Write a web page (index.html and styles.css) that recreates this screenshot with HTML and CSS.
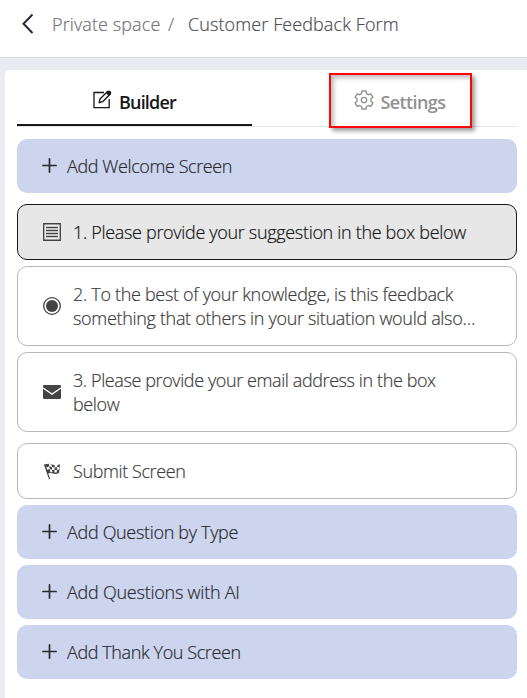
FILE: index.html
```html
<!DOCTYPE html>
<html lang="en">
<head>
<meta charset="utf-8">
<title>Customer Feedback Form</title>
<link rel="stylesheet" href="styles.css">
</head>
<body>
<svg class="defs" aria-hidden="true">
  <symbol id="plus" viewBox="0 0 15 15"><path d="M7.5 .9v13.2M.9 7.5h13.2" fill="none" stroke="currentColor" stroke-width="1.7" stroke-linecap="round"/></symbol>
</svg>
<header class="topbar">
  <svg class="back" viewBox="0 0 12 22"><path d="M10.5 1.5 1.5 10.8l9 9.2" fill="none" stroke="currentColor" stroke-width="2"/></svg>
  <span class="crumb space">Private space</span>
  <span class="crumb slash">/</span>
  <span class="crumb current">Customer Feedback Form</span>
</header>
<main class="panel">
  <nav class="tabs">
    <a class="tab active">
      <svg class="tab-icon" viewBox="0 0 20 20"><path d="M12 2.5H2v15.2h15.2V9" fill="none" stroke="currentColor" stroke-width="1.3"/><path d="m7.2 12.5.8-3.4 7.5-7.5 2.8 2.5-7.5 7.5z" fill="none" stroke="currentColor" stroke-width="1.4" stroke-linejoin="round"/><path d="m14 3 2.1-2.1q1-.8 2 .1l.8.8q.8 1 0 1.9L16.8 6z" fill="currentColor"/></svg>
      <span class="tab-label builder">Builder</span>
    </a>
    <a class="tab">
      <span class="highlight">
        <svg class="tab-icon" viewBox="0 0 20 20"><path d="M8 1h4l.6 2.7 1.7 1 2.6-.9 2 3.5-2 1.8v2l2 1.8-2 3.4-2.6-.8-1.7 1L12 19H8l-.6-2.5-1.7-1-2.6.8-2-3.4 2-1.8v-2l-2-1.8 2-3.5 2.6.9 1.7-1z" fill="none" stroke="currentColor" stroke-width="1.4" stroke-linejoin="round"/><circle cx="10" cy="10" r="2.7" fill="none" stroke="currentColor" stroke-width="1.3"/></svg>
        <span class="tab-label settings">Settings</span>
      </span>
    </a>
  </nav>
  <button class="add first"><svg class="plus"><use href="#plus"/></svg><span class="t-welcome">Add Welcome Screen</span></button>
  <section class="questions">
    <div class="card selected">
      <svg class="icon" viewBox="0 0 18 18"><path d="M.7.7h16.6v16.6H.7z" fill="#f2f2f2" stroke="currentColor" stroke-width="1.4"/><path d="M3 4.5h12M3 7.5h12M3 10.5h12M3 13.5h12" stroke="currentColor" stroke-width="1.3"/></svg>
      <p><span class="q1">1. Please provide your suggestion in the box below</span></p>
    </div>
    <div class="card">
      <svg class="icon" viewBox="0 0 18 18"><circle cx="9" cy="9" r="8.3" fill="none" stroke="currentColor" stroke-width="1.3"/><circle cx="9" cy="9" r="6" fill="currentColor"/></svg>
      <p><span class="q2a">2. To the best of your knowledge, is this feedback</span><br><span class="q2b">something that others in your situation would also…</span></p>
    </div>
    <div class="card">
      <svg class="icon" viewBox="0 0 18 18"><path d="M0 3.2Q0 2 1.2 2h15.6Q18 2 18 3.2v1L9 10.3 0 4.2zM0 5.8l9 6.1 9-6.1v9q0 1.2-1.2 1.2H1.2Q0 16 0 14.8z" fill="currentColor"/></svg>
      <p><span class="q3a">3. Please provide your email address in the box</span><br><span class="q3b">below</span></p>
    </div>
  </section>
  <div class="card submit">
    <svg class="icon" viewBox="0 0 18 18"><path d="M1.5 2.5 6.5 17" stroke="currentColor" stroke-width="1.1"/><path d="M1.5 2.7Q5 .8 9 2.4t8-.2L16 11q-3.5 1.7-6 .6t-5.5.2z" fill="currentColor"/><path d="m5.8 2 2.8.5.3 2.4-2.8-.3zM11.7 3.1l2.8-.2-.3 2.4-2.5.3zM3.3 5.4l2.8-.8.7 2.5-2.6.7zM8.9 4.9l2.8.7-.2 2.5-2.4-.3zM14.2 5.3l2-.5-.3 2.6-2 .5zM6.8 7.1l2.3.7.3 2.5-2-.1zM11.5 8.1l2.4-.2-.2 2.6-2.3.1z" fill="#fff"/></svg>
    <p><span class="t-submit">Submit Screen</span></p>
  </div>
  <div class="actions">
    <button class="add"><svg class="plus"><use href="#plus"/></svg><span class="t-type">Add Question by Type</span></button>
    <button class="add"><svg class="plus"><use href="#plus"/></svg><span class="t-ai">Add Questions with AI</span></button>
    <button class="add"><svg class="plus"><use href="#plus"/></svg><span class="t-thanks">Add Thank You Screen</span></button>
  </div>
</main>
</body>
</html>
```
FILE: styles.css
```css
* { box-sizing: border-box; }
body {
  margin: 0;
  height: 698px;
  overflow: hidden;
  background: #ebebf2;
  font: 300 18px/24px "Open Sans", "Noto Sans", sans-serif;
  letter-spacing: -0.4px;
  color: #3c3c3c;
  white-space: nowrap;
  -webkit-text-stroke: 0.2px currentColor;
}
.defs { display: none; }
svg { flex: none; display: block; }
.topbar {
  display: flex;
  align-items: center;
  height: 58px;
  padding: 0 0 9px 22px;
  background: #fff;
  border-bottom: 1px solid #dcdce0;
}
.back { width: 12px; height: 22px; color: #292935; }
.crumb { color: #4c4c50; letter-spacing: 0.1px; }
.space { margin-left: 18px; width: 116px; color: #737378; }
.slash { width: 20px; color: #737378; }
.panel {
  margin: 12px 0 0 5px;
  height: 628px;
  padding: 0 10px 0 12px;
  background: #fff;
  border-top-left-radius: 5px;
}
.tabs { display: flex; height: 57px; border-bottom: 1px solid #e4e4e4; }
.tab {
  display: flex;
  align-items: center;
  justify-content: center;
  height: 56px;
  width: 235px;
  font-weight: 600;
  color: #919191;
  -webkit-text-stroke: 0;
}
.tab.active { color: #17171c; border-bottom: 2px solid #17171c; padding: 10px 1px 0 0; }
.tab:last-child { flex: 1; padding-top: 5px; }
.tab-icon { width: 20px; height: 20px; margin: -4px 7px 0 0; }
.builder { letter-spacing: -0.8px; }
.settings { letter-spacing: -0.6px; }
.highlight {
  display: flex;
  align-items: center;
  width: 143px;
  height: 55px;
  padding: 3px 0 0 23px;
  margin: 0 0 0 31px;
  border: 2px solid #fb0505;
  box-shadow: 3px 3px 4px rgba(0,0,0,.38), inset 3px 3px 4px rgba(0,0,0,.25);
}
.add {
  display: flex;
  align-items: center;
  width: 500px;
  height: 54px;
  padding: 0 0 0 25px;
  border: 0;
  border-radius: 10px;
  background: #cdd5ee;
  color: #29292f;
  font: inherit;
  letter-spacing: inherit;
}
.add.first { margin: 12px 0 11px; }
.plus { width: 15px; height: 15px; margin: 0 10px 1px 0; }
.questions, .actions { display: grid; gap: 6px; }
.card {
  display: flex;
  align-items: center;
  width: 500px;
  height: 80px;
  padding: 0 0 0 25px;
  border: 1px solid #b9b9b9;
  border-radius: 10px;
}
.card p { margin: -1px 0 0; }
.q1, .q2a, .q2b { letter-spacing: -0.32px; }
.t-type { letter-spacing: -0.32px; }
.t-ai { letter-spacing: -0.24px; }
.selected { height: 56px; background: #e7e7e7; border-color: #17171c; color: #151515; }
.icon { width: 18px; height: 18px; margin-right: 12px; color: #444; }
.submit { height: 56px; margin: 11px 0 6px; }
```
